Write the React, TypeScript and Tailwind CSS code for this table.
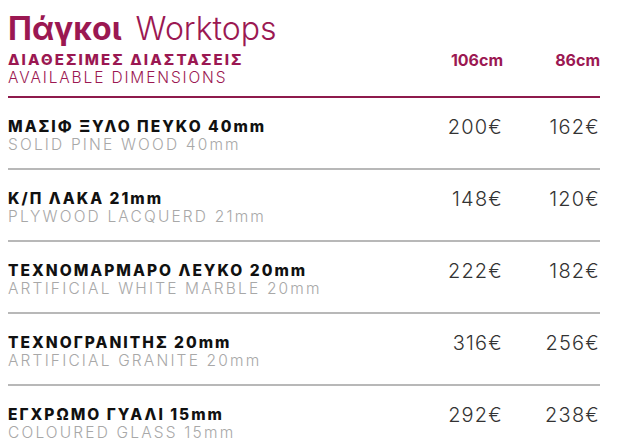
const rows = [
  { gr: "ΜΑΣΙΦ ΞΥΛΟ ΠΕΥΚΟ 40mm", en: "SOLID PINE WOOD 40mm", p1: "200€", p2: "162€" },
  { gr: "Κ/Π ΛΑΚΑ 21mm", en: "PLYWOOD LACQUERD 21mm", p1: "148€", p2: "120€" },
  { gr: "ΤΕΧΝΟΜΑΡΜΑΡΟ ΛΕΥΚΟ 20mm", en: "ARTIFICIAL WHITE MARBLE 20mm", p1: "222€", p2: "182€" },
  { gr: "ΤΕΧΝΟΓΡΑΝΙΤΗΣ 20mm", en: "ARTIFICIAL GRANITE 20mm", p1: "316€", p2: "256€" },
  { gr: "ΕΓΧΡΩΜΟ ΓΥΑΛΙ 15mm", en: "COLOURED GLASS 15mm", p1: "292€", p2: "238€" },
];

export default function App() {
  return (
    <main className="min-h-screen w-[621px] bg-white pl-[8px] pr-[21px] pt-[11px] font-['Inter',sans-serif]">
      <h1 className="text-[32px] leading-[36px] text-[#9b1852]">
        <span className="font-bold">Πάγκοι</span>
        <span className="ml-[14px] font-light">Worktops</span>
      </h1>

      <div className="mt-[4px] grid grid-cols-[1fr_97px_97px] border-b-2 border-[#8e1a4c] pb-[9px]">
        <div>
          <p className="text-[15px] font-extrabold leading-[18px] tracking-[0.14em] text-[#9b1852]">
            ΔΙΑΘΕΣΙΜΕΣ ΔΙΑΣΤΑΣΕΙΣ
          </p>
          <p className="text-[15.5px] font-light leading-[18px] tracking-[0.12em] text-[#9b1852]">
            AVAILABLE DIMENSIONS
          </p>
        </div>
        <p className="text-right text-[16px] font-bold leading-[18px] text-[#9b1852]">106cm</p>
        <p className="text-right text-[16px] font-bold leading-[18px] text-[#9b1852]">86cm</p>
      </div>

      {rows.map((r, i) => (
        <div
          key={r.gr}
          className={
            i < rows.length - 1
              ? "grid grid-cols-[1fr_97px_97px] border-b-2 border-[#b8b8b8] pb-[14px] pt-[20px]"
              : "grid grid-cols-[1fr_97px_97px] pt-[20px]"
          }
        >
          <div>
            <p className="text-[15.5px] font-extrabold leading-[18px] tracking-[0.13em] text-[#111]">{r.gr}</p>
            <p className="text-[15.5px] font-light leading-[18px] tracking-[0.14em] text-[#a8a8a8]">{r.en}</p>
          </div>
          <p className="-mt-[3px] text-right text-[20px] font-light leading-[24px] tracking-[0.06em] text-[#333]">
            {r.p1}
          </p>
          <p className="-mt-[3px] text-right text-[20px] font-light leading-[24px] tracking-[0.06em] text-[#333]">
            {r.p2}
          </p>
        </div>
      ))}
    </main>
  );
}
